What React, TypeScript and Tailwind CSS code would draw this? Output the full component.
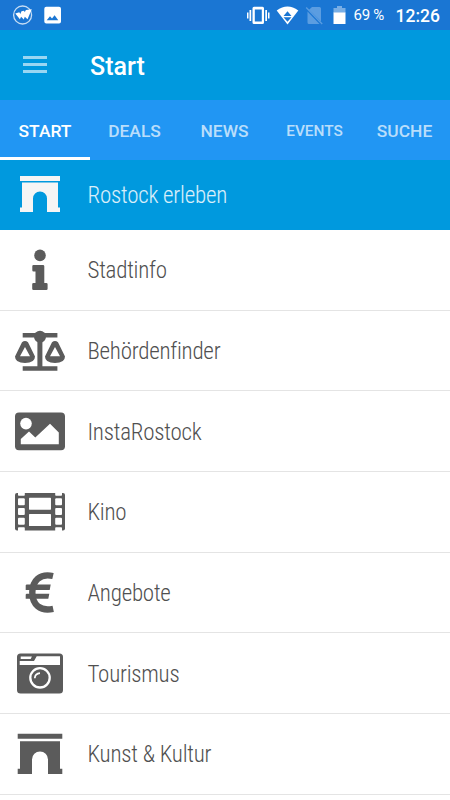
import type { ReactNode } from 'react';

const tabs = [
  { label: 'START', style: 'text-[17.4px] text-white' },
  { label: 'DEALS', style: 'text-[17.4px] text-white/70' },
  { label: 'NEWS', style: 'text-[17.4px] text-white/70' },
  { label: 'EVENTS', style: 'text-[15.4px] text-white/70' },
  { label: 'SUCHE', style: 'text-[17.4px] text-white/70' },
];

function Icon ({ children }: { children: ReactNode })
{
  return (
    <svg viewBox="0 0 50 40" className="h-10 w-[50px] shrink-0 overflow-visible fill-[#5b5b5b]">
      {children}
    </svg>
  );
}

const items = [
  {
    label: 'Stadtinfo',
    icon: (
      <Icon>
        <circle cx="25" cy="5.4" r="5.8" />
        <path d="M18.5 15H28q1.3 0 1.3 1.3V33h2q1.3 0 1.3 1.3v4.4q0 1.3-1.3 1.3H18.5q-1.3 0-1.3-1.3v-4.4q0-1.3 1.3-1.3h2V21.5h-2q-1.2 0-1.2-1.3v-4q0-1.2 1.2-1.2z" />
      </Icon>
    ),
  },
  {
    label: 'Behördenfinder',
    icon: (
      <Icon>
        <circle cx="25" cy="5.7" r="6" />
        <path d="M7.7 2h34.7v4.6H7.7zM22.4 6h5v31h-5zM7.7 35.2h34.7v4.6H7.7z" />
        <path fillRule="evenodd" d="M7 11.2Q10 9 13 11.2L20 25.5Q20 32 10 32Q0 32 0 25.5zM10 16L5 25.3h10zM37 11.2Q40 9 43 11.2L50 25.5Q50 32 40 32Q30 32 30 25.5zM40 16l-5 9.3h10z" />
      </Icon>
    ),
  },
  {
    label: 'InstaRostock',
    icon: (
      <Icon>
        <rect x="0" y=".6" width="50" height="37.6" rx="4" />
        <circle cx="11" cy="11.6" r="5.8" fill="#fff" />
        <path fill="#fff" d="M5.8 32.2V27l8.200-7.400 6.300 6L35 11.800l8.800 8.600v11.800z" />
      </Icon>
    ),
  },
  {
    label: 'Kino',
    icon: (
      <Icon>
        <rect x="0" y="1" width="50" height="37.6" rx="2" />
        <g fill="#fff">
          <rect x="14" y="5.7" width="22" height="12" rx=".6" />
          <rect x="14" y="22" width="22" height="12" rx=".6" />
          <path d="M3 .5h6.8V3q0 .8-.8.8H3.8Q3 3.8 3 3zM40.2.5H47V3q0 .8-.8.8H41q-.8 0-.8-.8zM3 39.1h6.8v-3q0-.8-.8-.8H3.8q-.8 0-.8.8zM40.2 39.1H47v-3q0-.8-.8-.8H41q-.8 0-.8.8z" />
          <rect x="3" y="6.3" width="6.8" height="7" rx="1" />
          <rect x="3" y="16" width="6.8" height="7" rx="1" />
          <rect x="3" y="25.7" width="6.8" height="7" rx="1" />
          <rect x="40.2" y="6.3" width="6.8" height="7" rx="1" />
          <rect x="40.2" y="16" width="6.8" height="7" rx="1" />
          <rect x="40.2" y="25.7" width="6.8" height="7" rx="1" />
        </g>
      </Icon>
    ),
  },
  {
    label: 'Angebote',
    icon: (
      <Icon>
        <path fill="none" stroke="#5b5b5b" strokeWidth="6.4" d="M38 3C25 .1 17.3 7.600 17.3 19.600S25 38.600 38.200 35.800" />
        <path d="M11.5 11.5h24.2l-1 5.4h-24v-4.6zM11.5 20.7h22.8l-1 5H10.7v-4.2z" />
      </Icon>
    ),
  },
  {
    label: 'Tourismus',
    icon: (
      <Icon>
        <rect x="2" y="-.6" width="46" height="40" rx="3.5" />
        <path fill="#fff" d="M21.7 2.3H45V11H4.7V6.900H19zM5.7 2.600h11.2L15.700 5h-10z" />
        <circle cx="25" cy="23.8" r="9.7" fill="none" stroke="#fff" strokeWidth="2.3" />
        <path fill="none" stroke="#fff" strokeWidth="1.7" d="M19.8 24.3q.2-4.8 5.2-5.2" />
      </Icon>
    ),
  },
  {
    label: 'Kunst & Kultur',
    icon: (
      <Icon>
        <path d="M2.7-.2h44.6v5H2.7zM5 7.3h40v27.5h2.3V40H33V25.5a8 8 0 0 0-16 0V40H2.7v-5.2H5z" />
      </Icon>
    ),
  },
];

function StatusBar ()
{
  return (
    <div className="flex h-[30px] items-center bg-[#1a76d3] text-white">
      <svg viewBox="0 0 240 30" className="h-[30px] w-[240px] shrink-0" fill="#fff">
        <circle cx="22.6" cy="15" r="9" fill="none" stroke="#fff" strokeOpacity=".75" strokeWidth="1.3" />
        <path d="M15.3 13.6l4-1.3 1 1.6 1.2-2.6 2.6-.6.6 1.6 1.2-2.4 5.9-.6-4.3 10-2.7-2.6-1 2.7-2.7-2.7-1.2 2.6z" />
        <path fillRule="evenodd" d="M46.3 6.8H59q2 0 2 2v12.6q0 2-2 2H46.3q-2 0-2-2V8.8q0-2 2-2zM46.7 20.2h11.6l-3.7-5-2.6 3.4-2-2.3z" />
      </svg>
      <svg viewBox="240 0 110 30" className="h-[30px] w-[110px] shrink-0" fill="#fff">
        <path fillRule="evenodd" d="M254 6.8h8.5q1.5 0 1.5 1.5v14.2q0 1.5-1.5 1.5H254q-1.5 0-1.5-1.5V8.3q0-1.5 1.5-1.5zm.8 2.7v12h7v-12z" />
        <path d="M249.5 10h1.7v11h-1.7zM247 12.5h1.5v6H247zM265.3 10h1.7v11h-1.7zM268 12.5h1.5v6H268z" />
        <path d="M276.7 10.5q10.8-8 21.6 0l-10.8 14z" />
        <path fill="#1a76d3" d="M287.5 11.3l4 4.7h-8zM283.5 17.3h8l-4 4.5z" />
        <path fill="#5b9de1" d="M312 7h7.5q1.5 0 1.5 1.5v13L309 9.8zM307.5 11.5L319.5 24H309q-1.5 0-1.5-1.5z" />
        <path stroke="#5b9de1" strokeWidth="1.3" d="M306.2 7.5l16 16.5" />
        <path fill="#78aee5" d="M337 6h5v2h3.5v5h-12V8h3.5z" />
        <path d="M333.5 12.5h12V24h-12z" />
      </svg>
      <span className="ml-[3.5px] w-[42px] pt-px text-[15px] tracking-[-0.25px] whitespace-nowrap">69 %</span>
      <span className="pt-[2px] text-[17.5px] font-medium">12:26</span>
    </div>
  );
}

export default function App ()
{
  return (
    <div className="h-[800px] w-[450px] overflow-hidden bg-white font-[Roboto,sans-serif]">
      <StatusBar />

      <header className="flex h-[70px] items-center bg-[#0099de] pl-[23px]">
        <div className="flex w-6 flex-col gap-1 pb-px">
          <i className="h-[3px] bg-white/60"></i>
          <i className="h-[3px] bg-white/60"></i>
          <i className="h-[3px] bg-white/60"></i>
        </div>
        <h1 className="ml-[43px] pt-[4px] text-[25px] font-medium text-white">Start</h1>
      </header>

      <nav className="grid h-[60px] grid-cols-5 bg-[#2196f3]">
        {tabs.map((tab, i) => (
          <div key={tab.label} className={i === 0 ? 'flex items-center justify-center border-b-[3px] border-white pt-[6px]' : 'flex items-center justify-center pt-[3px] pr-px'}>
            <span className={`font-medium ${tab.style}`}>{tab.label}</span>
          </div>
        ))}
      </nav>

      <div className="flex h-[70px] items-center gap-[27.5px] bg-[#0099de] pl-5">
        <svg viewBox="0 0 40 36" className="mb-[2px] h-9 w-10 fill-[#f5f5f5]">
          <path d="M0 0h40v5H0zM2 6.5h36v25h2V36H27V22.5a7 7 0 0 0-14 0V36H0v-4.5h2z" />
        </svg>
        <span className="pt-[2px] text-[23px] font-light tracking-[-0.25px] text-white/85 [font-stretch:75%]">Rostock erleben</span>
      </div>

      <ul>
        {items.map((item) => (
          <li key={item.label} className="flex h-[80.67px] items-center gap-[22.5px] border-b border-[#e4e4e4] pt-px pl-[15px]">
            {item.icon}
            <span className="pt-[2.5px] text-[23px] font-light tracking-[-0.25px] text-[#505050] [font-stretch:75%]">{item.label}</span>
          </li>
        ))}
      </ul>
    </div>
  );
}
